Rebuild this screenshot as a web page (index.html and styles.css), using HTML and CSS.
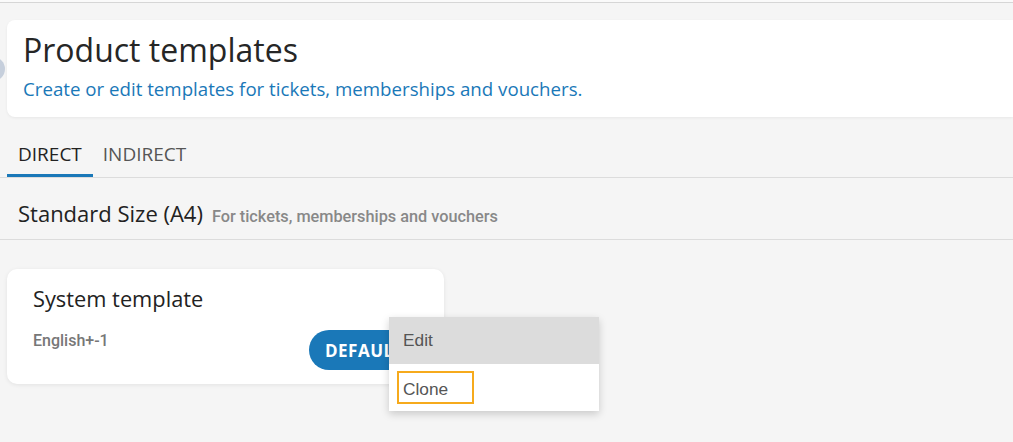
FILE: index.html
```html
<!DOCTYPE html>
<html>
<head>
  <title>Product templates</title>
  <link rel="stylesheet" href="styles.css">
</head>
<body>
  <div class="topbar"></div>
  <div class="page">
    <span class="collapse-knob"></span>

    <div class="header">
      <h1>Product templates</h1>
      <p class="subtitle">Create or edit templates for tickets, memberships and vouchers.</p>
    </div>

    <div class="tabs">
      <div class="tab active">DIRECT</div>
      <div class="tab">INDIRECT</div>
    </div>

    <div class="section-head">
      <h2>Standard Size (A4)</h2>
      <span class="section-note">For tickets, memberships and vouchers</span>
    </div>

    <div class="cards">
      <div class="card">
        <h3>System template</h3>
        <div class="card-foot">
          <span class="lang">English+-1</span>
          <button class="btn-default">DEFAULT</button>
        </div>
      </div>

      <ul class="menu">
        <li class="menu-item hover">Edit</li>
        <li class="menu-item"><span class="focus-ring">Clone</span></li>
      </ul>
    </div>
  </div>
</body>
</html>
```

FILE: styles.css
```css
body {
  margin: 0;
  min-height: 442px;
  background-color: #f5f5f5;
  font-family: "Open Sans", sans-serif;
}

.topbar {
  height: 2px;
  background-color: #fafafa;
  border-bottom: 1px solid #d6d6d6;
}

.page {
  position: relative;
  padding-top: 17px;
  padding-left: 7px;
}

.collapse-knob {
  position: absolute;
  left: -19px;
  top: 54px;
  width: 24px;
  height: 24px;
  border-radius: 50%;
  background-color: #c6cfdc;
}

.header {
  height: 97px;
  box-sizing: border-box;
  padding: 10px 16px 0 16px;
  background-color: #fff;
  border-radius: 8px 0 0 8px;
  box-shadow: 0 1px 3px rgba(0, 0, 0, 0.06);
}

.header h1 {
  margin: 0;
  font-size: 32px;
  font-weight: 400;
  color: #262626;
  line-height: 40px;
}

.subtitle {
  margin: 7px 0 0 0;
  font-size: 18.7px;
  color: #1a78b8;
  line-height: 24px;
}

.tabs {
  display: flex;
  margin-top: 15px;
  margin-left: -7px;
  padding-left: 7px;
  border-bottom: 1px solid #dcdcdc;
}

.tab {
  padding: 10px 11px 8px 11px;
  font-size: 19px;
  font-weight: 500;
  color: #555;
  line-height: 24px;
  border-bottom: 3px solid transparent;
}

.tab + .tab {
  padding-left: 10px;
}

.tab.active {
  color: #222;
  border-bottom-color: #1a78b8;
}

.section-head {
  display: flex;
  align-items: baseline;
  gap: 9px;
  margin-left: -7px;
  padding: 21px 0 12px 18px;
  border-bottom: 1px solid #dcdcdc;
}

.section-head h2 {
  margin: 0;
  font-size: 22px;
  font-weight: 500;
  color: #222;
  line-height: 28px;
}

.section-note {
  font-family: Roboto, sans-serif;
  font-size: 16.3px;
  font-weight: 500;
  color: #888;
}

.cards {
  position: relative;
  padding-top: 29px;
  padding-bottom: 40px;
}

.card {
  width: 437px;
  height: 115px;
  box-sizing: border-box;
  padding: 16px 26px 0 26px;
  background-color: #fff;
  border-radius: 10px;
  box-shadow: 0 1px 4px rgba(0, 0, 0, 0.08);
}

.card h3 {
  margin: 0;
  font-size: 21.8px;
  font-weight: 500;
  color: #222;
  line-height: 28px;
}

.card-foot {
  display: flex;
  align-items: flex-start;
  margin-top: 18px;
}

.lang {
  flex: 1;
  font-family: Roboto, sans-serif;
  font-size: 16px;
  font-weight: 500;
  color: #777;
  line-height: 20px;
}

.btn-default {
  margin-top: -1px;
  margin-right: -21px;
  width: 130px;
  height: 40px;
  padding-left: 16px;
  border: none;
  border-radius: 20px;
  background-color: #1a78b8;
  color: #fff;
  font-family: "Open Sans", sans-serif;
  font-size: 17px;
  font-weight: 700;
  letter-spacing: 0.5px;
  text-align: left;
}

/* context menu opened from the card */
.menu {
  position: absolute;
  left: 382px;
  top: 77px;
  width: 210px;
  margin: 0;
  padding: 0;
  list-style: none;
  background-color: #fff;
  box-shadow: 0 3px 8px rgba(0, 0, 0, 0.18);
}

.menu-item {
  height: 47px;
  box-sizing: border-box;
  padding: 0 14px;
  display: flex;
  align-items: center;
  font-family: "Liberation Sans", Arial, sans-serif;
  font-size: 17.3px;
  color: #555;
}

.menu-item.hover {
  background-color: #dcdcdc;
}

.focus-ring {
  box-sizing: border-box;
  width: 77px;
  height: 33px;
  margin-left: -6px;
  padding: 3px 0 0 4px;
  border: 2px solid #f6aa1c;
  line-height: 26px;
}
```
